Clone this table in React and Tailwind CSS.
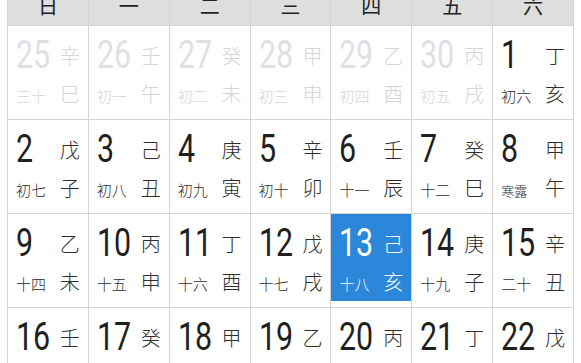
import React from 'react'

const weekdays = ['日', '一', '二', '三', '四', '五', '六']

const rows = [
  [
    { d: 25, s: '辛', b: '巳', l: '三十', faded: true },
    { d: 26, s: '壬', b: '午', l: '初一', faded: true },
    { d: 27, s: '癸', b: '未', l: '初二', faded: true },
    { d: 28, s: '甲', b: '申', l: '初三', faded: true },
    { d: 29, s: '乙', b: '酉', l: '初四', faded: true },
    { d: 30, s: '丙', b: '戌', l: '初五', faded: true },
    { d: 1, s: '丁', b: '亥', l: '初六' },
  ],
  [
    { d: 2, s: '戊', b: '子', l: '初七' },
    { d: 3, s: '己', b: '丑', l: '初八' },
    { d: 4, s: '庚', b: '寅', l: '初九' },
    { d: 5, s: '辛', b: '卯', l: '初十' },
    { d: 6, s: '壬', b: '辰', l: '十一' },
    { d: 7, s: '癸', b: '巳', l: '十二' },
    { d: 8, s: '甲', b: '午', l: '寒露', term: true },
  ],
  [
    { d: 9, s: '乙', b: '未', l: '十四' },
    { d: 10, s: '丙', b: '申', l: '十五' },
    { d: 11, s: '丁', b: '酉', l: '十六' },
    { d: 12, s: '戊', b: '戌', l: '十七' },
    { d: 13, s: '己', b: '亥', l: '十八', today: true },
    { d: 14, s: '庚', b: '子', l: '十九' },
    { d: 15, s: '辛', b: '丑', l: '二十' },
  ],
  [
    { d: 16, s: '壬', b: '寅', l: '廿一' },
    { d: 17, s: '癸', b: '卯', l: '廿二' },
    { d: 18, s: '甲', b: '辰', l: '廿三' },
    { d: 19, s: '乙', b: '巳', l: '廿四' },
    { d: 20, s: '丙', b: '午', l: '廿五' },
    { d: 21, s: '丁', b: '未', l: '廿六' },
    { d: 22, s: '戊', b: '申', l: '廿七' },
  ],
]

function DayCell({ day }) {
  let num = 'text-[#1f1f1f]'
  let ch = 'text-[#2e2e2e]'
  let box = 'bg-white'
  if (day.faded) {
    num = 'text-[#dde1e6]'
    ch = 'text-[#d4d6d8]'
  }
  if (day.today) {
    num = 'text-white'
    ch = 'text-white'
    box = 'bg-[#2a87d9]'
  }

  return (
    <div className="bg-white h-[93px]">
      <div className={`${box} h-[87px] flex flex-col px-2 pt-[10px]`}>
        <div className="h-[38px] flex items-center justify-between">
          <span
            className={`${num} inline-block origin-left scale-x-[0.8] text-[38px] leading-[38px] font-normal font-['Roboto',sans-serif]`}
          >
            {day.d}
          </span>
          <span className={`${ch} text-[20px] leading-[21px] font-light`}>{day.s}</span>
        </div>
        <div className="mt-[9px] flex items-baseline justify-between">
          <span className={`${ch} ${day.term ? 'text-[13px]' : 'text-[15px]'} leading-[21px] font-light`}>
            {day.l}
          </span>
          <span className={`${ch} text-[20px] leading-[21px] font-light`}>{day.b}</span>
        </div>
      </div>
    </div>
  )
}

export default function App() {
  return (
    <div className="w-[581px] h-[363px] overflow-hidden bg-white font-['Noto_Sans_CJK_SC',sans-serif]">
      <div className="ml-[7px] w-[567px] -mt-[20px] grid grid-cols-7 gap-px bg-[#d4d4d4] border border-[#d4d4d4]">
        {weekdays.map((w) => (
          <div
            key={w}
            className="h-[44px] pt-[6px] bg-[#dedede] flex items-center justify-center text-[20px] leading-[20px] text-[#222]"
          >
            {w}
          </div>
        ))}
        {rows.flat().map((day, i) => (
          <DayCell key={i} day={day} />
        ))}
      </div>
    </div>
  )
}
